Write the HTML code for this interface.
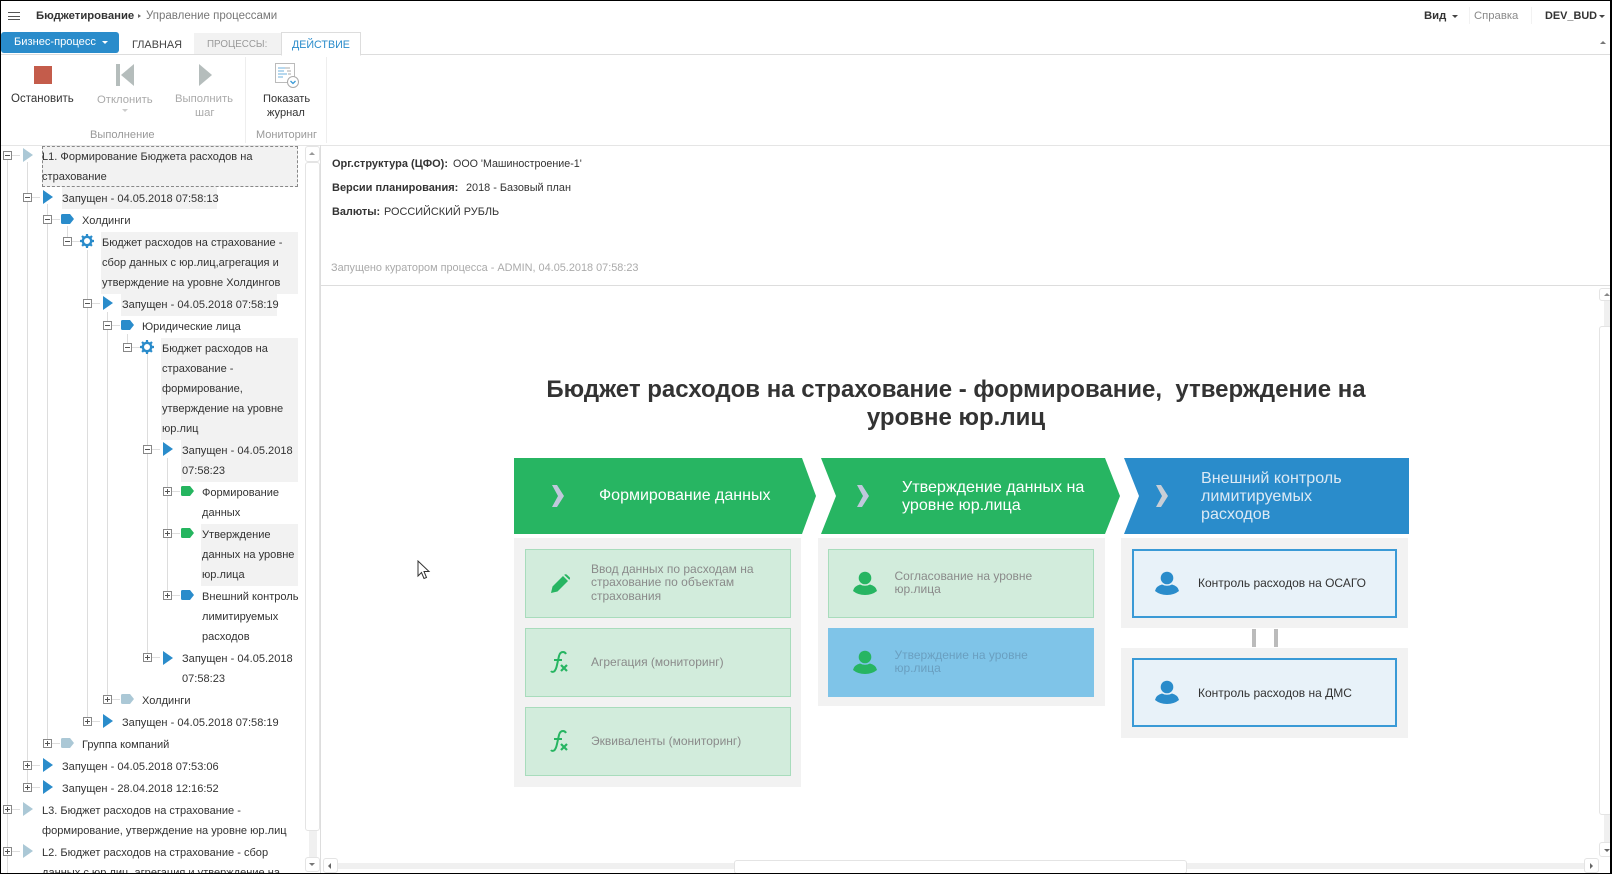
<!DOCTYPE html>
<html><head><meta charset="utf-8"><style>
html,body{margin:0;padding:0;background:#fff}
#o{position:relative;width:1612px;height:874px;overflow:hidden;background:#fff}
#p{position:absolute;left:0;top:0;width:1612px;height:874px;overflow:hidden;background:#fff;font-family:"Liberation Sans",sans-serif;font-size:11.1px;color:#333;filter:blur(.3px)}
#p div,#p svg{position:absolute}
.t{white-space:nowrap;line-height:20px;height:20px;margin-top:-10px}
.c{white-space:nowrap;line-height:14px;height:14px;margin-top:-7px;font-size:12px}
.i{font-size:10.9px}
.r{font-size:11.5px}
.g{background:#f2f2f2}
.v{width:1px;background:#ddd}
.h{height:1px;background:#ddd}
.x{width:9px;height:9px;border:1px solid #888;background:#fff;box-sizing:border-box;margin-top:1px}
.x:before{content:"";position:absolute;left:1px;top:3px;width:5px;height:1px;background:#555}
.x.p:after{content:"";position:absolute;left:3px;top:1px;width:1px;height:5px;background:#555}
.card{border:1px solid #a8dcbc;background:#d2ecdc;box-sizing:border-box}
.bc{border:2px solid #3a9ad6;background:#e8f2f9;box-sizing:border-box}
.hd{color:#fff;font-size:16.1px;line-height:18px;white-space:nowrap}
.sb{border:1px solid #e4e4e4;border-radius:3px;background:#fff;box-sizing:border-box}
</style></head><body><div id="o"><div id="p">

<!-- top bar -->
<div style="left:8px;top:12px;width:12px;height:1px;background:#555"></div>
<div style="left:8px;top:16px;width:12px;height:1px;background:#555"></div>
<div style="left:8px;top:19px;width:12px;height:1px;background:#555"></div>
<div class="t r" style="left:36px;top:16px;font-weight:bold;font-size:11.3px;color:#333">Бюджетирование</div>
<div style="left:138px;top:14px;width:0;height:0;border-left:3px solid #666;border-top:2.5px solid transparent;border-bottom:2.5px solid transparent"></div>
<div class="t r" style="left:146px;top:16px;color:#777">Управление процессами</div>
<div class="t" style="left:1424px;top:16px;font-weight:bold;font-size:11.3px">Вид</div>
<div style="left:1452px;top:14.5px;width:0;height:0;border-top:3px solid #444;border-left:3px solid transparent;border-right:3px solid transparent"></div>
<div style="left:1469px;top:7px;width:1px;height:17px;background:#f2f2f2"></div>
<div class="t" style="left:1474px;top:16px;font-size:11.3px;color:#8a8a8a">Справка</div>
<div style="left:1531px;top:7px;width:1px;height:17px;background:#f2f2f2"></div>
<div class="t" style="left:1545px;top:16px;font-weight:bold;font-size:10.9px">DEV_BUD</div>
<div style="left:1599px;top:14.5px;width:0;height:0;border-top:3px solid #444;border-left:3px solid transparent;border-right:3px solid transparent"></div>

<!-- tabs -->
<div style="left:1px;top:32px;width:118px;height:21px;background:#2a8ccb;border-radius:3px"></div>
<div class="t" style="left:14px;top:42px;color:#fff;font-size:11.1px">Бизнес-процесс</div>
<div style="left:102px;top:41px;width:0;height:0;border-top:3px solid #fff;border-left:3px solid transparent;border-right:3px solid transparent"></div>
<div class="t" style="left:132px;top:44.5px;font-size:10.9px;color:#444">ГЛАВНАЯ</div>
<div style="left:194px;top:33px;width:87px;height:21px;background:#f2f2f2"></div>
<div class="t" style="left:207px;top:44.5px;font-size:9.8px;color:#999">ПРОЦЕССЫ:</div>
<div class="h" style="left:0;top:54px;width:1610px"></div>
<div style="left:281px;top:32px;width:78px;height:22px;background:#fff;border:1px solid #ddd;border-bottom:1px solid #fff"></div>
<div class="t" style="left:292px;top:44.5px;font-size:10.7px;color:#2a8ccb">ДЕЙСТВИЕ</div>
<div style="left:1600px;top:41px;width:0;height:0;border-bottom:3px solid #777;border-left:3px solid transparent;border-right:3px solid transparent"></div>

<!-- ribbon -->
<div style="left:34px;top:66px;width:18px;height:18px;background:#c45c4b"></div>
<div class="t r" style="left:11px;top:99px">Остановить</div>
<div style="left:116px;top:64px;width:4px;height:22px;background:#b5bdbc"></div>
<svg style="left:121px;top:64px" width="14" height="22"><path d="M13 0V22L0 11Z" fill="#b5bdbc"/></svg>
<div class="t r" style="left:97px;top:100px;color:#aaa;font-size:11.3px">Отклонить</div>
<div style="left:122px;top:109px;width:0;height:0;border-top:3px solid #ccc;border-left:3px solid transparent;border-right:3px solid transparent"></div>
<svg style="left:199px;top:64px" width="14" height="22"><path d="M0 0V22L13 11Z" fill="#b5bdbc"/></svg>
<div class="t r" style="left:175px;top:99px;color:#aaa;font-size:11.3px">Выполнить</div>
<div class="t r" style="left:195px;top:113px;color:#aaa;font-size:11.3px">шаг</div>
<div style="left:245px;top:57px;width:1px;height:86px;background:#eee"></div>
<svg style="left:275px;top:63px" width="25" height="26"><rect x=".5" y=".5" width="19" height="19" fill="#fff" stroke="#bbb"/><path d="M3 5h9M3 8h6M3 11h9M3 14h5" stroke="#6fb0dc" fill="none"/><path d="M10 5h5M12 8h4M13 11h3" stroke="#aaa" fill="none"/><circle cx="18" cy="19" r="5.5" fill="#fff" stroke="#aaa"/><path d="M15.5 18l2.5 2.5 2.5-2.5" stroke="#3a9ad6" fill="none" stroke-width="1.3"/></svg>
<div class="t" style="left:263px;top:99px;font-size:11.1px">Показать</div>
<div class="t" style="left:267px;top:113px;font-size:11.1px">журнал</div>
<div style="left:326px;top:57px;width:1px;height:86px;background:#eee"></div>
<div class="t" style="left:90px;top:135px;font-size:11.1px;color:#999">Выполнение</div>
<div class="t" style="left:256px;top:135px;font-size:11px;color:#999">Мониторинг</div>
<div class="h" style="left:0;top:145px;width:1610px;background:#e5e5e5"></div>

<!-- tree highlights -->
<div class="g" style="left:42px;top:146px;width:256px;height:41px;border:1px dashed #888;box-sizing:border-box"></div>
<div class="g" style="left:62px;top:187px;width:155px;height:22px"></div>
<div class="g" style="left:101px;top:232px;width:197px;height:62px"></div>
<div class="g" style="left:121px;top:294px;width:156px;height:22px"></div>
<div class="g" style="left:161px;top:338px;width:137px;height:102px"></div>
<div class="g" style="left:181px;top:440px;width:117px;height:42px"></div>
<div class="g" style="left:201px;top:524px;width:97px;height:62px"></div>

<!-- tree lines -->
<div class="v" style="left:7px;top:160px;height:714px"></div>
<div class="v" style="left:27px;top:162px;height:626px"></div>
<div class="v" style="left:47px;top:204px;height:540px"></div>
<div class="v" style="left:67px;top:226px;height:16px"></div>
<div class="v" style="left:87px;top:250px;height:472px"></div>
<div class="v" style="left:107px;top:312px;height:388px"></div>
<div class="v" style="left:127px;top:334px;height:14px"></div>
<div class="v" style="left:147px;top:354px;height:304px"></div>
<div class="v" style="left:167px;top:458px;height:138px"></div>

<div class="h" style="left:12px;top:155px;width:8px"></div>
<div class="h" style="left:32px;top:197px;width:8px"></div>
<div class="h" style="left:52px;top:219px;width:8px"></div>
<div class="h" style="left:72px;top:241px;width:8px"></div>
<div class="h" style="left:92px;top:303px;width:8px"></div>
<div class="h" style="left:112px;top:325px;width:8px"></div>
<div class="h" style="left:132px;top:347px;width:8px"></div>
<div class="h" style="left:152px;top:449px;width:8px"></div>
<div class="h" style="left:172px;top:491px;width:8px"></div>
<div class="h" style="left:172px;top:533px;width:8px"></div>
<div class="h" style="left:172px;top:595px;width:8px"></div>
<div class="h" style="left:152px;top:657px;width:8px"></div>
<div class="h" style="left:112px;top:699px;width:8px"></div>
<div class="h" style="left:92px;top:721px;width:8px"></div>
<div class="h" style="left:52px;top:743px;width:8px"></div>
<div class="h" style="left:32px;top:765px;width:8px"></div>
<div class="h" style="left:32px;top:787px;width:8px"></div>
<div class="h" style="left:12px;top:809px;width:8px"></div>
<div class="h" style="left:12px;top:851px;width:8px"></div>

<!-- toggles -->
<div class="x" style="left:3px;top:150px"></div>
<div class="x" style="left:23px;top:192px"></div>
<div class="x" style="left:43px;top:214px"></div>
<div class="x" style="left:63px;top:236px"></div>
<div class="x" style="left:83px;top:298px"></div>
<div class="x" style="left:103px;top:320px"></div>
<div class="x" style="left:123px;top:342px"></div>
<div class="x" style="left:143px;top:444px"></div>
<div class="x p" style="left:163px;top:486px"></div>
<div class="x p" style="left:163px;top:528px"></div>
<div class="x p" style="left:163px;top:590px"></div>
<div class="x p" style="left:143px;top:652px"></div>
<div class="x p" style="left:103px;top:694px"></div>
<div class="x p" style="left:83px;top:716px"></div>
<div class="x p" style="left:43px;top:738px"></div>
<div class="x p" style="left:23px;top:760px"></div>
<div class="x p" style="left:23px;top:782px"></div>
<div class="x p" style="left:3px;top:804px"></div>
<div class="x p" style="left:3px;top:846px"></div>

<!-- triangle icons -->
<svg style="left:23px;top:148px" width="10" height="14"><path d="M0 0L10 7L0 14Z" fill="#abc8d6"/></svg>
<svg style="left:43px;top:190px" width="10" height="14"><path d="M0 0L10 7L0 14Z" fill="#2a8ccb"/></svg>
<svg style="left:103px;top:296px" width="10" height="14"><path d="M0 0L10 7L0 14Z" fill="#2a8ccb"/></svg>
<svg style="left:163px;top:442px" width="10" height="14"><path d="M0 0L10 7L0 14Z" fill="#2a8ccb"/></svg>
<svg style="left:163px;top:651px" width="10" height="14"><path d="M0 0L10 7L0 14Z" fill="#2a8ccb"/></svg>
<svg style="left:103px;top:714px" width="10" height="14"><path d="M0 0L10 7L0 14Z" fill="#2a8ccb"/></svg>
<svg style="left:43px;top:758px" width="10" height="14"><path d="M0 0L10 7L0 14Z" fill="#2a8ccb"/></svg>
<svg style="left:43px;top:780px" width="10" height="14"><path d="M0 0L10 7L0 14Z" fill="#2a8ccb"/></svg>
<svg style="left:23px;top:802px" width="10" height="14"><path d="M0 0L10 7L0 14Z" fill="#abc8d6"/></svg>
<svg style="left:23px;top:844px" width="10" height="14"><path d="M0 0L10 7L0 14Z" fill="#abc8d6"/></svg>

<!-- tag icons -->
<svg style="left:61px;top:214px" width="13" height="10"><path d="M1.5 0H9L13 5L9 10H1.5Q0 10 0 8.5V1.5Q0 0 1.5 0Z" fill="#2a8ccb"/></svg>
<svg style="left:121px;top:320px" width="13" height="10"><path d="M1.5 0H9L13 5L9 10H1.5Q0 10 0 8.5V1.5Q0 0 1.5 0Z" fill="#2a8ccb"/></svg>
<svg style="left:181px;top:486px" width="13" height="10"><path d="M1.5 0H9L13 5L9 10H1.5Q0 10 0 8.5V1.5Q0 0 1.5 0Z" fill="#25b55f"/></svg>
<svg style="left:181px;top:528px" width="13" height="10"><path d="M1.5 0H9L13 5L9 10H1.5Q0 10 0 8.5V1.5Q0 0 1.5 0Z" fill="#25b55f"/></svg>
<svg style="left:181px;top:590px" width="13" height="10"><path d="M1.5 0H9L13 5L9 10H1.5Q0 10 0 8.5V1.5Q0 0 1.5 0Z" fill="#2a8ccb"/></svg>
<svg style="left:121px;top:694px" width="13" height="10"><path d="M1.5 0H9L13 5L9 10H1.5Q0 10 0 8.5V1.5Q0 0 1.5 0Z" fill="#abc8d6"/></svg>
<svg style="left:61px;top:738px" width="13" height="10"><path d="M1.5 0H9L13 5L9 10H1.5Q0 10 0 8.5V1.5Q0 0 1.5 0Z" fill="#abc8d6"/></svg>

<!-- gears -->
<svg style="left:80px;top:234px" width="14" height="14" viewBox="0 0 14 14"><circle cx="7" cy="7" r="4.2" fill="none" stroke="#2a8ccb" stroke-width="2.4"/><path d="M7 0V14M0 7H14M2 2L12 12M12 2L2 12" stroke="#2a8ccb" stroke-width="2.2" stroke-dasharray="2.6 8.8"/></svg>
<svg style="left:140px;top:340px" width="14" height="14" viewBox="0 0 14 14"><circle cx="7" cy="7" r="4.2" fill="none" stroke="#2a8ccb" stroke-width="2.4"/><path d="M7 0V14M0 7H14M2 2L12 12M12 2L2 12" stroke="#2a8ccb" stroke-width="2.2" stroke-dasharray="2.6 8.8"/></svg>

<!-- tree text -->
<div style="left:0;top:1px;width:300px;height:873px;font-size:11.05px">
<div class="t" style="left:42px;top:156px">L1. Формирование Бюджета расходов на</div>
<div class="t" style="left:42px;top:176px">страхование</div>
<div class="t" style="left:62px;top:198px">Запущен - 04.05.2018 07:58:13</div>
<div class="t" style="left:82px;top:220px">Холдинги</div>
<div class="t" style="left:102px;top:242px">Бюджет расходов на страхование -</div>
<div class="t" style="left:102px;top:262px">сбор данных с юр.лиц,агрегация и</div>
<div class="t" style="left:102px;top:282px">утверждение на уровне Холдингов</div>
<div class="t" style="left:122px;top:304px">Запущен - 04.05.2018 07:58:19</div>
<div class="t" style="left:142px;top:326px">Юридические лица</div>
<div class="t" style="left:162px;top:348px">Бюджет расходов на</div>
<div class="t" style="left:162px;top:368px">страхование -</div>
<div class="t" style="left:162px;top:388px">формирование,</div>
<div class="t" style="left:162px;top:408px">утверждение на уровне</div>
<div class="t" style="left:162px;top:428px">юр.лиц</div>
<div class="t" style="left:182px;top:450px">Запущен - 04.05.2018</div>
<div class="t" style="left:182px;top:470px">07:58:23</div>
<div class="t" style="left:202px;top:492px">Формирование</div>
<div class="t" style="left:202px;top:512px">данных</div>
<div class="t" style="left:202px;top:534px">Утверждение</div>
<div class="t" style="left:202px;top:554px">данных на уровне</div>
<div class="t" style="left:202px;top:574px">юр.лица</div>
<div class="t" style="left:202px;top:596px">Внешний контроль</div>
<div class="t" style="left:202px;top:616px">лимитируемых</div>
<div class="t" style="left:202px;top:636px">расходов</div>
<div class="t" style="left:182px;top:658px">Запущен - 04.05.2018</div>
<div class="t" style="left:182px;top:678px">07:58:23</div>
<div class="t" style="left:142px;top:700px">Холдинги</div>
<div class="t" style="left:122px;top:722px">Запущен - 04.05.2018 07:58:19</div>
<div class="t" style="left:82px;top:744px">Группа компаний</div>
<div class="t" style="left:62px;top:766px">Запущен - 04.05.2018 07:53:06</div>
<div class="t" style="left:62px;top:788px">Запущен - 28.04.2018 12:16:52</div>
<div class="t" style="left:42px;top:810px">L3. Бюджет расходов на страхование -</div>
<div class="t" style="left:42px;top:830px">формирование, утверждение на уровне юр.лиц</div>
<div class="t" style="left:42px;top:852px">L2. Бюджет расходов на страхование - сбор</div>
<div class="t" style="left:42px;top:872px">данных с юр.лиц, агрегация и утверждение на</div>
</div>

<!-- tree scrollbar -->
<div style="left:309px;top:162px;width:8px;height:695px;background:#f0f0f0"></div>
<div class="sb" style="left:305px;top:146px;width:15px;height:16px"></div>
<div style="left:309px;top:152px;width:0;height:0;border-bottom:3px solid #999;border-left:3px solid transparent;border-right:3px solid transparent"></div>
<div class="sb" style="left:305px;top:162px;width:15px;height:669px"></div>
<div class="sb" style="left:305px;top:857px;width:15px;height:15px"></div>
<div style="left:309px;top:863px;width:0;height:0;border-top:3px solid #777;border-left:3px solid transparent;border-right:3px solid transparent"></div>
<div class="v" style="left:320px;top:145px;height:729px"></div>

<!-- info -->
<div class="c i" style="left:332px;top:164px;font-size:11px;font-weight:bold">Орг.структура (ЦФО):</div>
<div class="c i" style="left:453px;top:164px;font-size:10.7px">ООО 'Машиностроение-1'</div>
<div class="c i" style="left:332px;top:188px;font-size:11px;font-weight:bold">Версии планирования:</div>
<div class="c i" style="left:466px;top:188px">2018 - Базовый план</div>
<div class="c i" style="left:332px;top:212px;font-weight:bold">Валюты:</div>
<div class="c i" style="left:384px;top:212px">РОССИЙСКИЙ РУБЛЬ</div>
<div class="c i" style="left:331px;top:268px;color:#aaa">Запущено куратором процесса - ADMIN, 04.05.2018 07:58:23</div>
<div class="h" style="left:321px;top:285px;width:1289px"></div>

<!-- heading -->
<div style="left:500px;top:376px;width:912px;text-align:center;font-weight:bold;font-size:24px;line-height:28px;color:#333;white-space:pre">Бюджет расходов на страхование - формирование,  утверждение на
уровне юр.лиц</div>

<!-- chevrons -->
<svg style="left:514px;top:458px" width="900" height="76"><path d="M0 0H288L302 38L288 76H0Z" fill="#27b562"/><path d="M307 0H591L606 38L591 76H307L322 38Z" fill="#27b562"/><path d="M610 0H895V76H610L625 38Z" fill="#2a8ccb"/></svg>
<svg style="left:552px;top:485px" width="13" height="22"><path d="M0 0H5L12 11L5 22H0L6 11Z" fill="#c0c8dc"/></svg>
<svg style="left:857px;top:485px" width="13" height="22"><path d="M0 0H5L12 11L5 22H0L6 11Z" fill="#c0c8dc"/></svg>
<svg style="left:1156px;top:485px" width="13" height="22"><path d="M0 0H5L12 11L5 22H0L6 11Z" fill="#c8ced6"/></svg>
<div class="hd" style="left:599px;top:486.5px;font-size:16px">Формирование данных</div>
<div class="hd" style="left:902px;top:478px">Утверждение данных на<br>уровне юр.лица</div>
<div class="hd" style="left:1201px;top:468.5px;color:#dbe9f4">Внешний контроль<br>лимитируемых<br>расходов</div>

<!-- panels -->
<div style="left:514px;top:538px;width:287px;height:249px;background:#f2f2f2"></div>
<div style="left:818px;top:538px;width:287px;height:168px;background:#f2f2f2"></div>
<div style="left:1121px;top:538px;width:287px;height:90px;background:#f2f2f2"></div>
<div style="left:1121px;top:648px;width:287px;height:90px;background:#f2f2f2"></div>
<div style="left:1252px;top:629px;width:4px;height:18px;background:#bbb"></div>
<div style="left:1274px;top:629px;width:4px;height:18px;background:#bbb"></div>

<div class="card" style="left:525px;top:549px;width:266px;height:69px"></div>
<div class="card" style="left:525px;top:628px;width:266px;height:69px"></div>
<div class="card" style="left:525px;top:707px;width:266px;height:69px"></div>
<div class="card" style="left:828px;top:549px;width:266px;height:69px"></div>
<div style="left:828px;top:628px;width:266px;height:69px;background:#7fc4e8"></div>
<div class="bc" style="left:1132px;top:549px;width:265px;height:69px"></div>
<div class="bc" style="left:1132px;top:658px;width:265px;height:69px"></div>

<!-- card icons -->
<svg style="left:551px;top:574px" width="20" height="19" viewBox="0 0 20 19"><path d="M0 19L1.5 12.5L12 2L17 7L6.5 17.5Z" fill="#27b562"/><path d="M13.2 .9Q14.5 -.3 15.8 .6L18.6 3.3Q19.6 4.6 18.3 5.8Z" fill="#27b562"/></svg>
<svg style="left:550px;top:651px" width="20" height="22" viewBox="0 0 20 22"><path d="M1 20Q2 21.5 4 20.5Q6 19 7 14L9 5Q10 1 13 1Q15 1 16 3M4 9H12" fill="none" stroke="#27b562" stroke-width="2"/><path d="M11 14L17 20M17 14L11 20" stroke="#27b562" stroke-width="2.2"/></svg>
<svg style="left:550px;top:730px" width="20" height="22" viewBox="0 0 20 22"><path d="M1 20Q2 21.5 4 20.5Q6 19 7 14L9 5Q10 1 13 1Q15 1 16 3M4 9H12" fill="none" stroke="#27b562" stroke-width="2"/><path d="M11 14L17 20M17 14L11 20" stroke="#27b562" stroke-width="2.2"/></svg>
<svg style="left:853px;top:571px" width="24" height="24" viewBox="0 0 24 24"><circle cx="12" cy="7" r="6.3" fill="#27b562"/><path d="M0 20Q1 15 7 13.5Q12 16 17 13.5Q23 15 24 20Q19 24 12 24Q5 24 0 20Z" fill="#27b562"/></svg>
<svg style="left:853px;top:650px" width="24" height="24" viewBox="0 0 24 24"><circle cx="12" cy="7" r="6.3" fill="#27b562"/><path d="M0 20Q1 15 7 13.5Q12 16 17 13.5Q23 15 24 20Q19 24 12 24Q5 24 0 20Z" fill="#27b562"/></svg>
<svg style="left:1155px;top:571px" width="24" height="24" viewBox="0 0 24 24"><circle cx="12" cy="7" r="6.3" fill="#2a8ccb"/><path d="M0 20Q1 15 7 13.5Q12 16 17 13.5Q23 15 24 20Q19 24 12 24Q5 24 0 20Z" fill="#2a8ccb"/></svg>
<svg style="left:1155px;top:680px" width="24" height="24" viewBox="0 0 24 24"><circle cx="12" cy="7" r="6.3" fill="#2a8ccb"/><path d="M0 20Q1 15 7 13.5Q12 16 17 13.5Q23 15 24 20Q19 24 12 24Q5 24 0 20Z" fill="#2a8ccb"/></svg>

<!-- card text -->
<div class="c" style="left:591px;top:569px;color:#8a8a8a">Ввод данных по расходам на</div>
<div class="c" style="left:591px;top:582px;color:#8a8a8a">страхование по объектам</div>
<div class="c" style="left:591px;top:596px;color:#8a8a8a">страхования</div>
<div class="c" style="left:591px;top:662px;color:#8a8a8a">Агрегация (мониторинг)</div>
<div class="c" style="left:591px;top:741px;color:#8a8a8a">Эквиваленты (мониторинг)</div>
<div class="c" style="left:894.5px;top:576px;color:#8a8a8a">Согласование на уровне</div>
<div class="c" style="left:894.5px;top:589px;color:#8a8a8a">юр.лица</div>
<div class="c" style="left:894.5px;top:655px;color:#6a9fc0">Утверждение на уровне</div>
<div class="c" style="left:894.5px;top:668px;color:#6a9fc0">юр.лица</div>
<div class="c" style="left:1198px;top:583px;color:#333">Контроль расходов на ОСАГО</div>
<div class="c" style="left:1198px;top:692.5px;color:#333">Контроль расходов на ДМС</div>

<!-- cursor -->
<svg style="left:417px;top:560px" width="14" height="20"><path d="M1 1V16L4.5 12.5L7 18.5L9.5 17.5L7 11.5H12Z" fill="#fff" stroke="#333"/></svg>

<!-- main scrollbars -->
<div style="left:1604px;top:300px;width:6px;height:542px;background:#f0f0f0"></div>
<div class="sb" style="left:1599px;top:288px;width:13px;height:13px"></div>
<div style="left:1604px;top:293px;width:0;height:0;border-bottom:3px solid #888;border-left:3px solid transparent;border-right:3px solid transparent"></div>
<div class="sb" style="left:1599px;top:326px;width:13px;height:489px"></div>
<div class="sb" style="left:1599px;top:842px;width:13px;height:15px"></div>
<div style="left:1604px;top:849px;width:0;height:0;border-top:3px solid #666;border-left:3px solid transparent;border-right:3px solid transparent"></div>
<div style="left:338px;top:863px;width:1246px;height:6px;background:#f0f0f0"></div>
<div class="sb" style="left:323px;top:858px;width:15px;height:15px"></div>
<div style="left:328px;top:863px;width:0;height:0;border-right:3px solid #666;border-top:3px solid transparent;border-bottom:3px solid transparent"></div>
<div class="sb" style="left:734px;top:860px;width:453px;height:14px"></div>
<div class="sb" style="left:1584px;top:858px;width:15px;height:15px"></div>
<div style="left:1590px;top:863px;width:0;height:0;border-left:3px solid #666;border-top:3px solid transparent;border-bottom:3px solid transparent"></div>
</div>

<!-- black frame -->
<div style="position:absolute;left:0;top:0;width:1612px;height:1px;background:#000"></div>
<div style="position:absolute;left:0;top:0;width:1px;height:874px;background:#000"></div>
<div style="position:absolute;left:1610px;top:0;width:2px;height:874px;background:#000"></div>
<div style="position:absolute;left:0;top:873px;width:1612px;height:1px;background:#000"></div>
</div></body></html>
